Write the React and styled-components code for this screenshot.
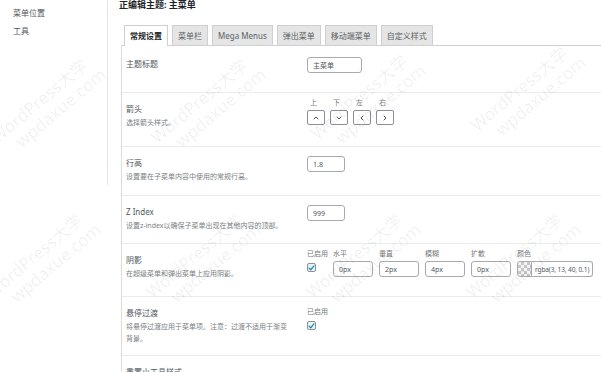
import React from 'react';
import styled, { createGlobalStyle } from 'styled-components';
import { ChevronUp, ChevronDown, ChevronLeft, ChevronRight } from 'lucide-react';

const GlobalStyle = createGlobalStyle`
  html, body {
    margin: 0;
    padding: 0;
    background: #fff;
    overflow: hidden;
  }
  body {
    font-family: "Noto Sans", "Noto Sans CJK SC", sans-serif;
    color: #444;
  }
`;

const Page = styled.div`
  position: relative;
  display: flex;
  align-items: flex-start;
  width: 601px;
  height: 372px;
  overflow: hidden;
`;

const Sidebar = styled.div`
  flex: 0 0 108px;
  height: 185px;
  box-sizing: border-box;
  padding-top: 7px;
  border-right: 1px solid #e4e4e4;
`;

const SideItem = styled.div`
  padding-left: 13px;
  margin-bottom: 6px;
  font-size: 8px;
  line-height: 12px;
  color: #50575e;
`;

const Main = styled.div`
  flex: 1;
  min-width: 0;
  padding-left: 11px;
`;

const Heading = styled.h1`
  margin: 0;
  font-size: 9px;
  line-height: 10px;
  font-weight: 700;
  color: #1d2327;
`;

const TabBar = styled.div`
  display: flex;
  align-items: flex-start;
  gap: 4px;
  height: 20px;
  margin: 15px 0 0 2px;
  padding-left: 3px;
  border-bottom: 1px solid #cfcfcf;
`;

const Tab = styled.div`
  height: ${p => (p.$active ? 21 : 20)}px;
  box-sizing: border-box;
  padding: 0 5px;
  border: 1px solid #cfcfcf;
  border-bottom: 0;
  background: ${p => (p.$active ? '#fff' : '#e5e5e5')};
  color: ${p => (p.$active ? '#1d2327' : '#5a5f64')};
  font-size: 8px;
  font-weight: ${p => (p.$active ? 700 : 400)};
  line-height: 19px;
  white-space: nowrap;
`;

const Panel = styled.div`
  margin-left: 2px;
  border-left: 1px solid #dcdcdc;
`;

const Row = styled.div`
  display: flex;
  align-items: flex-start;
  height: ${p => p.$h}px;
  box-sizing: border-box;
  padding: ${p => p.$pt}px 0 0 4px;
  border-bottom: 1px solid #ececec;
`;

const LabelCol = styled.div`
  flex: 0 0 167px;
  margin-right: 14px;
`;

const Label = styled.div`
  font-size: 8px;
  line-height: 12px;
  color: #50575e;
`;

const Desc = styled.div`
  margin-top: 2px;
  font-size: 7px;
  line-height: 12px;
  color: #7a7f84;
`;

const ControlCol = styled.div`
  display: flex;
  align-items: flex-start;
  gap: ${p => p.$gap || 0}px;
  margin-top: ${p => p.$shift || 0}px;
`;

const Field = styled.div`
  display: flex;
  flex-direction: column;
  gap: 2px;
  width: ${p => (p.$w ? `${p.$w}px` : 'auto')};
`;

const SmallLabel = styled.div`
  padding-left: ${p => p.$indent || 0}px;
  font-size: 7px;
  line-height: 10px;
  color: #777;
  white-space: nowrap;
`;

const TextInput = styled.input`
  width: ${p => p.$w}px;
  height: 16px;
  box-sizing: border-box;
  margin: 0;
  padding: 0 5px;
  border: 1px solid #a7aaad;
  border-radius: 3px;
  background: #fff;
  font-family: "Noto Sans", "Noto Sans CJK SC", sans-serif;
  font-size: 7px;
  color: #50575e;
  outline: none;
`;

const ArrowButton = styled.div`
  display: flex;
  align-items: center;
  justify-content: center;
  width: 18px;
  height: 15px;
  box-sizing: border-box;
  border: 1px solid #8c8f94;
  border-radius: 2px;
  background: #fff;
  color: #2c3338;
`;

const Checkbox = styled.div`
  width: 9px;
  height: 9px;
  box-sizing: border-box;
  margin-top: 2px;
  border: 1px solid #8c8f94;
  border-radius: 2px;
  background: #eef3f8;
  display: flex;
  align-items: center;
  justify-content: center;
`;

const ColorControl = styled.div`
  display: flex;
`;

const Swatch = styled.div`
  width: 15px;
  height: 16px;
  box-sizing: border-box;
  border: 1px solid #a7aaad;
  border-radius: 3px 0 0 3px;
  background: repeating-conic-gradient(#c8c8c8 0% 25%, #f4f4f4 0% 50%) 0 0 / 6px 6px;
`;

const ColorInput = styled(TextInput)`
  border-left: 0;
  border-radius: 0 3px 3px 0;
  padding: 0 2px 0 3px;
  font-size: 6.5px;
  letter-spacing: -0.1px;
`;

const Watermark = styled.div`
  position: absolute;
  left: ${p => p.$x}px;
  top: ${p => p.$y}px;
  transform: translate(-50%, -50%) rotate(-40deg);
  pointer-events: none;
  font-family: "Noto Sans", "Noto Sans CJK SC", sans-serif;
  font-size: 17px;
  line-height: 19px;
  text-align: center;
  white-space: nowrap;
  color: rgba(0, 0, 0, 0.065);
`;

const MarkSub = styled.div`
  padding-left: 24px;
`;

const arrows = [
  { label: '上', Icon: ChevronUp },
  { label: '下', Icon: ChevronDown },
  { label: '左', Icon: ChevronLeft },
  { label: '右', Icon: ChevronRight },
];

const shadowFields = [
  { label: '水平', value: '0px' },
  { label: '垂直', value: '2px' },
  { label: '模糊', value: '4px' },
  { label: '扩散', value: '0px' },
];

const tabs = ['常规设置', '菜单栏', 'Mega Menus', '弹出菜单', '移动端菜单', '自定义样式'];

const marks = [
  [45, 108], [205, 108], [365, 104], [525, 96],
  [40, 263], [200, 263], [360, 263], [520, 263],
];

const Check = () => (
  <svg width="8" height="8" viewBox="0 0 8 8">
    <path d="M1.3 4.2 L3.2 6 L6.8 1.6" fill="none" stroke="#1e8cbe" strokeWidth="1.5" strokeLinecap="round" strokeLinejoin="round" />
  </svg>
);

const Enabled = () => (
  <Field $w={20}>
    <SmallLabel>已启用</SmallLabel>
    <Checkbox><Check /></Checkbox>
  </Field>
);

export default function App() {
  return (
    <>
      <GlobalStyle />
      <Page>
        <Sidebar>
          <SideItem>菜单位置</SideItem>
          <SideItem>工具</SideItem>
        </Sidebar>
        <Main>
          <Heading>正编辑主题: 主菜单</Heading>
          <TabBar>
            {tabs.map((t, i) => (
              <Tab key={t} $active={i === 0}>{t}</Tab>
            ))}
          </TabBar>
          <Panel>
            <Row $h={47} $pt={12}>
              <LabelCol>
                <Label>主题标题</Label>
              </LabelCol>
              <ControlCol $shift={-1}>
                <TextInput $w={55} value="主菜单" readOnly />
              </ControlCol>
            </Row>
            <Row $h={54} $pt={10}>
              <LabelCol>
                <Label>箭头</Label>
                <Desc>选择箭头样式。</Desc>
              </LabelCol>
              <ControlCol $shift={-5} $gap={5}>
                {arrows.map(({ label, Icon }) => (
                  <Field key={label}>
                    <SmallLabel $indent={3}>{label}</SmallLabel>
                    <ArrowButton><Icon size={8} strokeWidth={2.6} /></ArrowButton>
                  </Field>
                ))}
              </ControlCol>
            </Row>
            <Row $h={49} $pt={10}>
              <LabelCol>
                <Label>行高</Label>
                <Desc>设置要在子菜单内容中使用的常规行高。</Desc>
              </LabelCol>
              <ControlCol $shift={-1}>
                <TextInput $w={38} value="1.8" readOnly />
              </ControlCol>
            </Row>
            <Row $h={48} $pt={10}>
              <LabelCol>
                <Label>Z Index</Label>
                <Desc>设置z-index以确保子菜单出现在其他内容的顶部。</Desc>
              </LabelCol>
              <ControlCol $shift={-1}>
                <TextInput $w={38} value="999" readOnly />
              </ControlCol>
            </Row>
            <Row $h={53} $pt={10}>
              <LabelCol>
                <Label>阴影</Label>
                <Desc>在超级菜单和弹出菜单上应用阴影。</Desc>
              </LabelCol>
              <ControlCol $shift={-5} $gap={6}>
                <Enabled />
                {shadowFields.map(f => (
                  <Field key={f.label}>
                    <SmallLabel>{f.label}</SmallLabel>
                    <TextInput $w={40} value={f.value} readOnly />
                  </Field>
                ))}
                <Field>
                  <SmallLabel>颜色</SmallLabel>
                  <ColorControl>
                    <Swatch />
                    <ColorInput $w={61} value="rgba(3, 13, 40, 0.1)" readOnly />
                  </ColorControl>
                </Field>
              </ControlCol>
            </Row>
            <Row $h={59} $pt={10}>
              <LabelCol>
                <Label>悬停过渡</Label>
                <Desc>将悬停过渡应用于菜单项。注意：过渡不适用于渐变背景。</Desc>
              </LabelCol>
              <ControlCol>
                <Enabled />
              </ControlCol>
            </Row>
            <Row $h={40} $pt={10}>
              <LabelCol>
                <Label>重置小工具样式</Label>
              </LabelCol>
            </Row>
          </Panel>
        </Main>
        {marks.map(([x, y]) => (
          <Watermark key={`${x}-${y}`} $x={x} $y={y}>
            <div>WordPress大学</div>
            <MarkSub>wpdaxue.com</MarkSub>
          </Watermark>
        ))}
      </Page>
    </>
  );
}
